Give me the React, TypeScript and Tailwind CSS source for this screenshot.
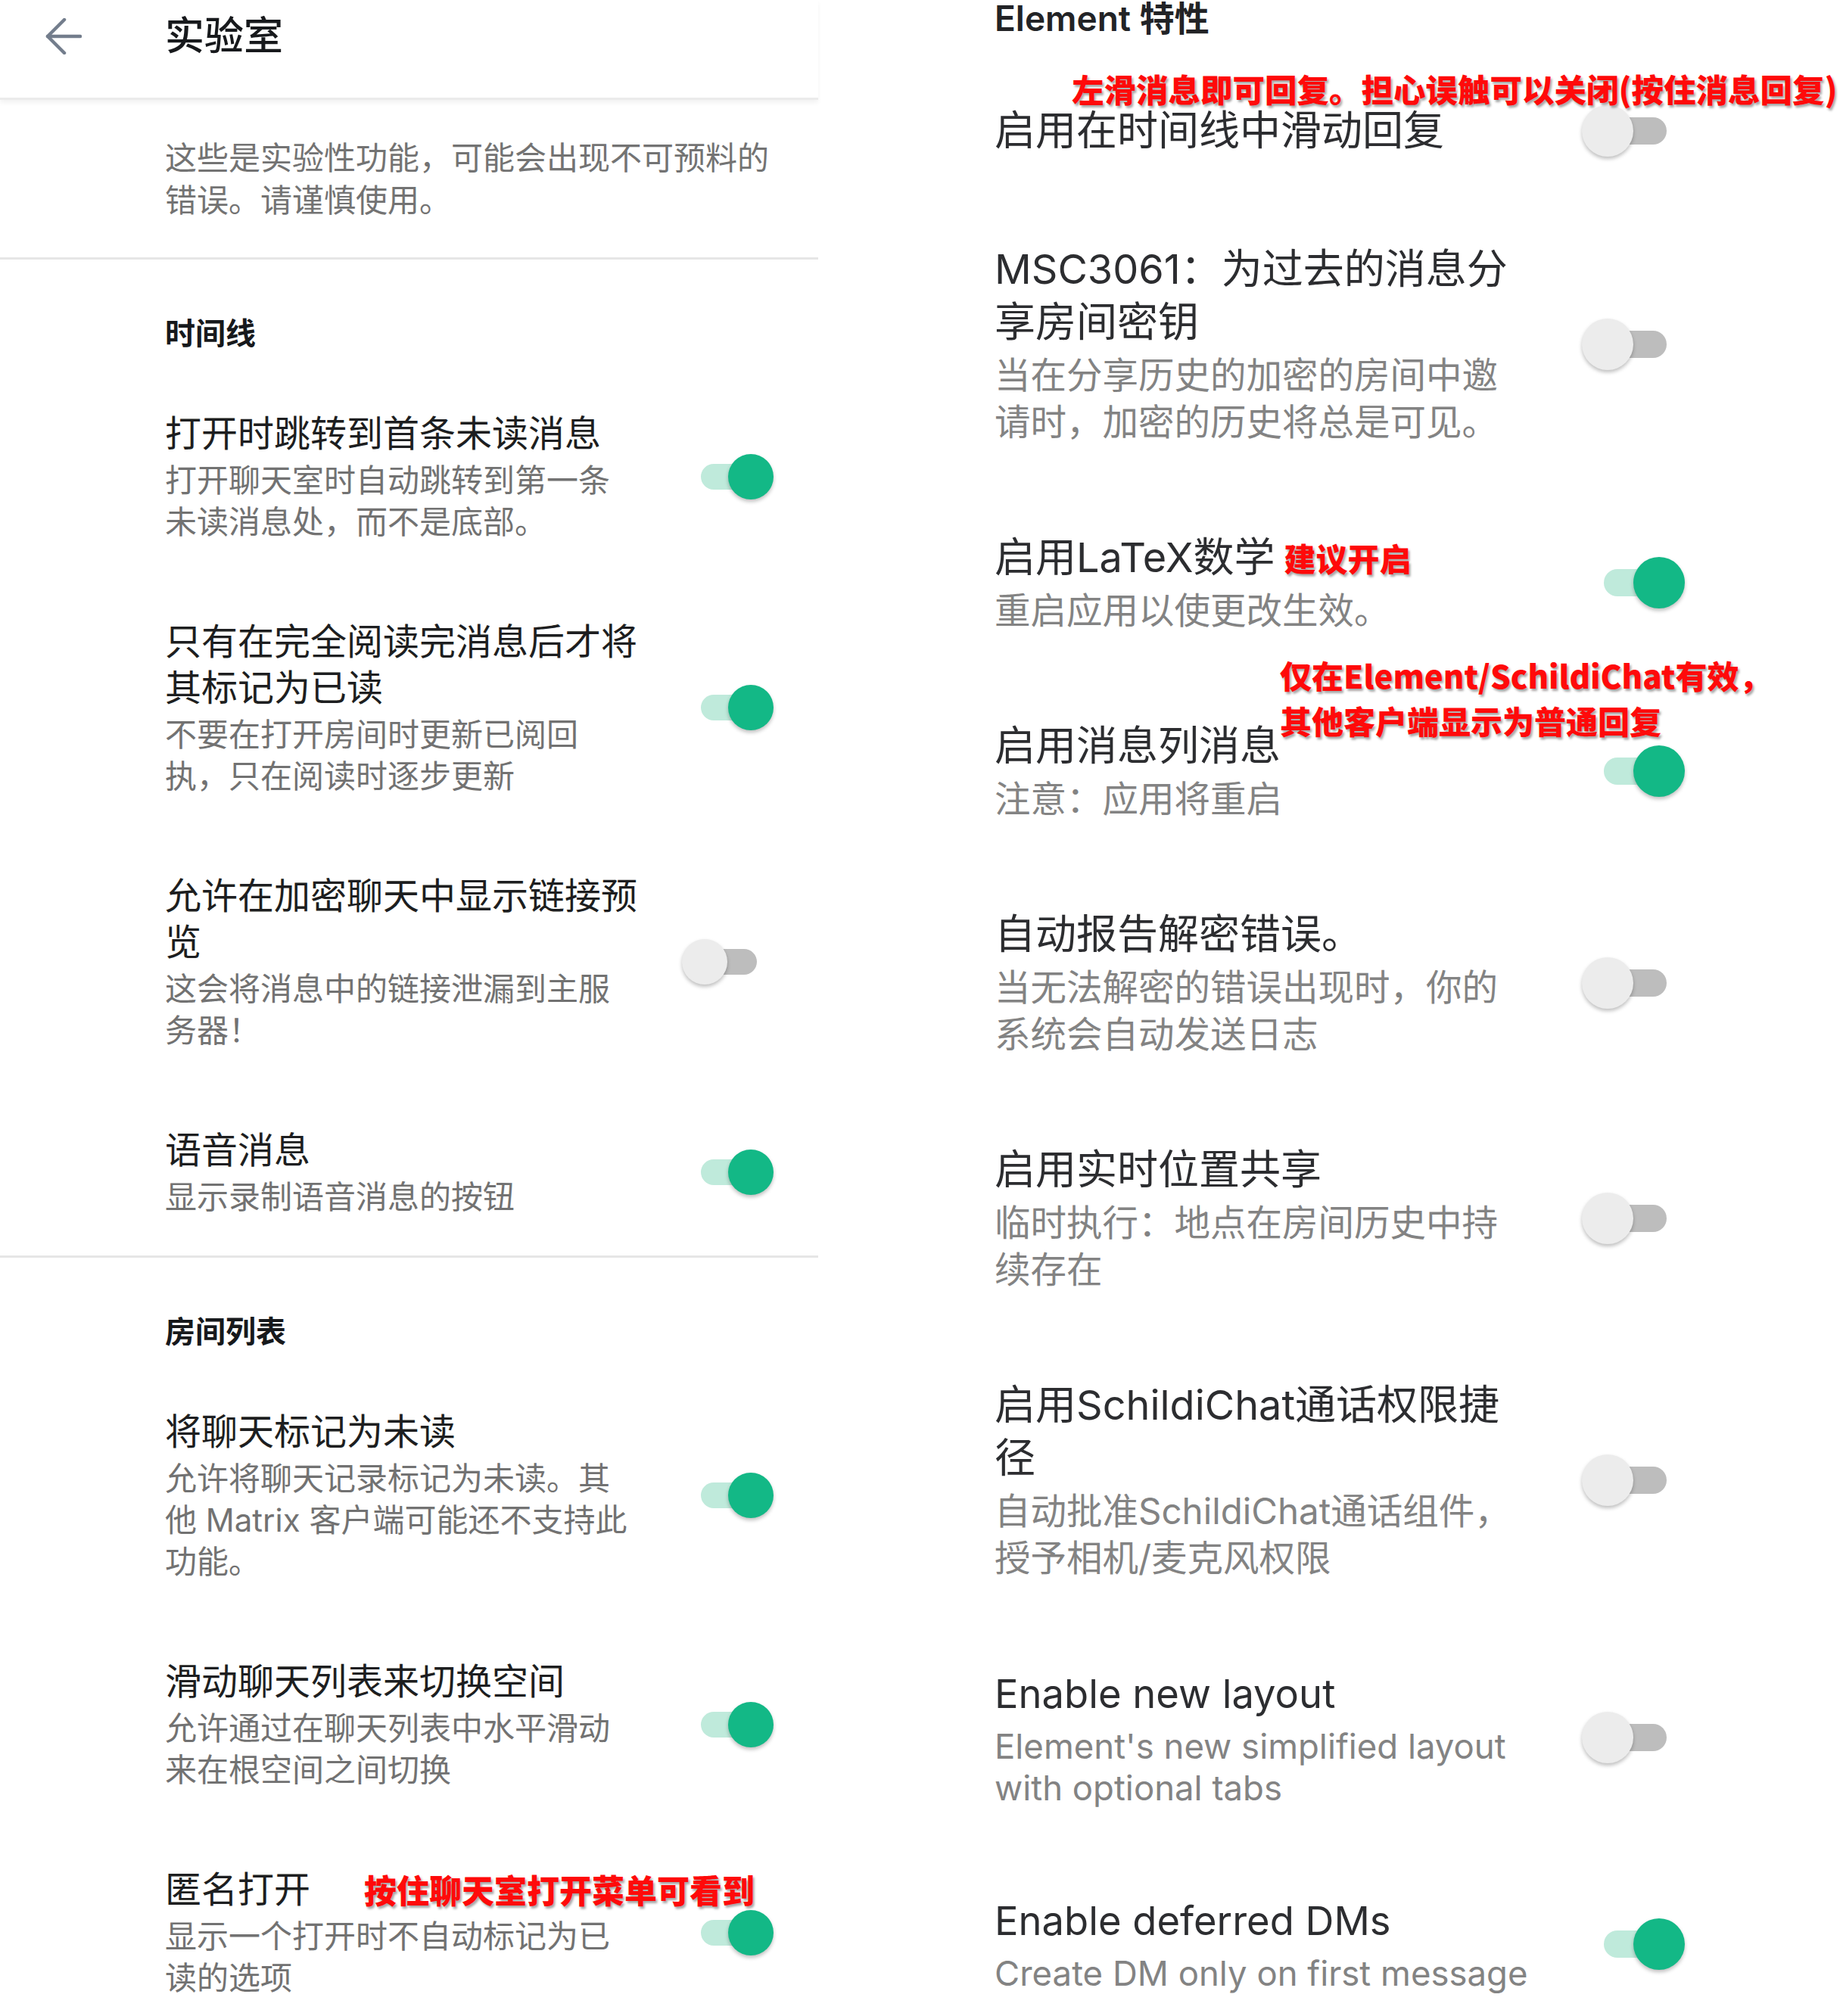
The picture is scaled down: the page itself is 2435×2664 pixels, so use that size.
type Item = {
  title: string[];
  sub: string[];
  on: boolean;
  note?: string;
  latin?: boolean;
};

const timeline: Item[] = [
  {
    title: ["打开时跳转到首条未读消息"],
    sub: ["打开聊天室时自动跳转到第一条", "未读消息处，而不是底部。"],
    on: true,
  },
  {
    title: ["只有在完全阅读完消息后才将", "其标记为已读"],
    sub: ["不要在打开房间时更新已阅回", "执，只在阅读时逐步更新"],
    on: true,
  },
  {
    title: ["允许在加密聊天中显示链接预", "览"],
    sub: ["这会将消息中的链接泄漏到主服", "务器！"],
    on: false,
  },
  { title: ["语音消息"], sub: ["显示录制语音消息的按钮"], on: true },
];

const roomList: Item[] = [
  {
    title: ["将聊天标记为未读"],
    sub: ["允许将聊天记录标记为未读。其", "他 Matrix 客户端可能还不支持此", "功能。"],
    on: true,
  },
  {
    title: ["滑动聊天列表来切换空间"],
    sub: ["允许通过在聊天列表中水平滑动", "来在根空间之间切换"],
    on: true,
  },
  {
    title: ["匿名打开"],
    note: "按住聊天室打开菜单可看到",
    sub: ["显示一个打开时不自动标记为已", "读的选项"],
    on: true,
  },
];

const features: Item[] = [
  { title: ["启用在时间线中滑动回复"], sub: [], on: false },
  {
    title: ["MSC3061：为过去的消息分", "享房间密钥"],
    sub: ["当在分享历史的加密的房间中邀", "请时，加密的历史将总是可见。"],
    on: false,
  },
  { title: ["启用LaTeX数学"], note: "建议开启", sub: ["重启应用以使更改生效。"], on: true },
  { title: ["启用消息列消息"], sub: ["注意：应用将重启"], on: true },
  {
    title: ["自动报告解密错误。"],
    sub: ["当无法解密的错误出现时，你的", "系统会自动发送日志"],
    on: false,
  },
  {
    title: ["启用实时位置共享"],
    sub: ["临时执行：地点在房间历史中持", "续存在"],
    on: false,
  },
  {
    title: ["启用SchildiChat通话权限捷", "径"],
    sub: ["自动批准SchildiChat通话组件，", "授予相机/麦克风权限"],
    on: false,
  },
  {
    title: ["Enable new layout"],
    sub: ["Element's new simplified layout", "with optional tabs"],
    on: false,
    latin: true,
  },
  {
    title: ["Enable deferred DMs"],
    sub: ["Create DM only on first message"],
    on: true,
    latin: true,
  },
];

const red =
  "font-['Noto_Sans_CJK_SC',sans-serif] font-black text-[#ff0a0a] whitespace-nowrap [text-shadow:2px_3px_3px_rgba(0,0,0,0.35)]";

const Toggle = ({ on, large }: { on: boolean; large?: boolean }) => {
  if (large) {
    return (
      <div className="relative w-[136px] h-[68px] shrink-0">
        <div
          className={`absolute left-[29px] top-[16px] w-[83px] h-[36px] rounded-full ${
            on ? "bg-[#bfeadb]" : "bg-[#bdbdbd]"
          }`}
        />
        <div
          className={`absolute top-0 size-[68px] rounded-full shadow-[0_3px_5px_rgba(0,0,0,0.25)] ${
            on ? "left-[68px] bg-[#13b886]" : "left-0 bg-[#ececec]"
          }`}
        />
      </div>
    );
  }
  return (
    <div className="relative w-[121px] h-[60px] shrink-0">
      <div
        className={`absolute left-[25px] top-[13px] w-[74px] h-[34px] rounded-full ${
          on ? "bg-[#bfeadb]" : "bg-[#bdbdbd]"
        }`}
      />
      <div
        className={`absolute top-0 size-[60px] rounded-full shadow-[0_3px_5px_rgba(0,0,0,0.25)] ${
          on ? "left-[61px] bg-[#13b886]" : "left-0 bg-[#ececec]"
        }`}
      />
    </div>
  );
};

const LeftRow = ({ item }: { item: Item }) => (
  <div className="flex items-center py-[50px] pl-[218px] pr-[59px]">
    <div className="flex-1 min-w-0 whitespace-nowrap">
      {item.title.map((t, i) => (
        <div key={i} className="flex items-center gap-[71px] text-[48px] leading-[61px] text-[#1d1e20]">
          <span>{t}</span>
          {item.note && i === 0 && <span className={`${red} text-[43px]`}>{item.note}</span>}
        </div>
      ))}
      <div className="mt-[4px] text-[42px] leading-[55px] text-[#727272]">
        {item.sub.map((s, i) => (
          <div key={i}>{s}</div>
        ))}
      </div>
    </div>
    <Toggle on={item.on} />
  </div>
);

const RightRow = ({ item }: { item: Item }) => (
  <div className="flex items-center py-[56.5px]">
    <div className="flex-1 min-w-0 whitespace-nowrap">
      {item.title.map((t, i) => (
        <div
          key={i}
          className={`flex items-center gap-[12px] leading-[70px] text-[#2c2d30] ${
            item.latin ? "text-[52.5px]" : "text-[54px]"
          }`}
        >
          <span>{t}</span>
          {item.note && i === 0 && <span className={`${red} text-[42px]`}>{item.note}</span>}
        </div>
      ))}
      {item.sub.length > 0 && (
        <div
          className={`text-[#838383] ${
            item.latin ? "mt-[7px] text-[45.5px] leading-[55px]" : "mt-[4px] text-[47.5px] leading-[62px]"
          }`}
        >
          {item.sub.map((s, i) => (
            <div key={i}>{s}</div>
          ))}
        </div>
      )}
    </div>
    <Toggle on={item.on} large />
  </div>
);

const SectionTitle = ({ children }: { children: string }) => (
  <div className="pt-[70px] pb-[23px] pl-[218px] text-[40px] leading-[56px] font-bold text-[#17191c]">
    {children}
  </div>
);

export default function App() {
  return (
    <div className="flex w-[2435px] h-[2664px] overflow-hidden bg-white font-['Inter','Noto_Sans_CJK_SC',sans-serif]">
      <div className="w-[1081px] shrink-0">
        <header className="h-[132px] border-b-[3px] border-[#ebebeb] shadow-[0_4px_6px_rgba(0,0,0,0.05)]">
          <div className="h-[96px] flex items-center pl-[60px]">
            <svg width="48" height="48" viewBox="0 0 48 48" fill="none" stroke="#737d8c" strokeWidth="4.5" strokeLinecap="round" strokeLinejoin="round">
              <path d="M3 24H46" />
              <path d="M25 2L3 24L25 46" />
            </svg>
            <h1 className="ml-[110px] text-[52px] leading-[60px] font-medium text-[#17191c]">实验室</h1>
          </div>
        </header>

        <div className="pt-[49px] pb-[47px] pl-[218px] text-[42px] leading-[56px] text-[#737373] whitespace-nowrap">
          <div>这些是实验性功能，可能会出现不可预料的</div>
          <div>错误。请谨慎使用。</div>
        </div>
        <div className="h-[3px] bg-[#e6e6e6]" />

        <SectionTitle>时间线</SectionTitle>
        {timeline.map((item) => (
          <LeftRow key={item.title[0]} item={item} />
        ))}
        <div className="h-[3px] bg-[#e6e6e6]" />

        <SectionTitle>房间列表</SectionTitle>
        {roomList.map((item) => (
          <LeftRow key={item.title[0]} item={item} />
        ))}
      </div>

      <div className="relative flex-1 pl-[233px] pr-[209px]">
        <h2 className="h-[48px] mb-[33px] text-[46px] leading-[48px] font-semibold text-[#222326] whitespace-nowrap">
          Element 特性
        </h2>
        {features.map((item) => (
          <RightRow key={item.title[0]} item={item} />
        ))}

        <div className={`${red} absolute left-[335px] top-[92px] text-[42.5px] leading-[50px]`}>
          左滑消息即可回复。担心误触可以关闭(按住消息回复)
        </div>
        <div className={`${red} absolute left-[610px] top-[862px] text-[42px] leading-[60px]`}>
          <div>仅在Element/SchildiChat有效，</div>
          <div>其他客户端显示为普通回复</div>
        </div>
      </div>
    </div>
  );
}
